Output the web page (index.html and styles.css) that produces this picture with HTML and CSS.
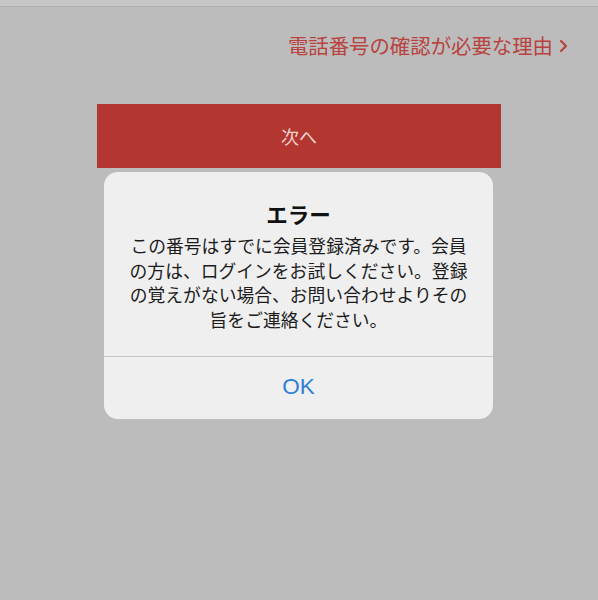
FILE: index.html
```html
<!DOCTYPE html>
<html lang="ja">
<head>
    <meta charset="UTF-8">
    <meta name="viewport" content="width=device-width, initial-scale=1.0">
    <title>電話番号の確認</title>
    <link rel="stylesheet" href="styles.css">
</head>
<body>
    <div class="top-bar"></div>

    <div class="reason-row">
        <a class="reason-link" href="#">電話番号の確認が必要な理由
            <svg class="chevron" width="9" height="14" viewBox="0 0 9 14">
                <path d="M2 2 L7 7 L2 12" fill="none" stroke="#b8433f" stroke-width="2.2" stroke-linecap="round" stroke-linejoin="round"/>
            </svg>
        </a>
    </div>

    <button class="next-btn">次へ</button>

    <!-- Alert -->
    <div class="alert">
        <h3 class="alert-title">エラー</h3>
        <p class="alert-msg">この番号はすでに会員登録済みです。会員<br>の方は、ログインをお試しください。登録<br>の覚えがない場合、お問い合わせよりその<br>旨をご連絡ください。</p>
        <button class="alert-ok">OK</button>
    </div>
</body>
</html>
```

FILE: styles.css
```css
body {
    background: #bcbcbc;
    font-family: "Noto Sans CJK JP", "Noto Sans", sans-serif;
    margin: 0;
    padding: 0;
    height: 600px;
    overflow: hidden;
}
.top-bar {
    height: 6px;
    background: #c6c6c6;
    border-bottom: 1px solid #b0b0b0;
}
.reason-row {
    display: flex;
    justify-content: flex-end;
    padding: 24px 30px 0 0;
}
.reason-link {
    display: flex;
    align-items: center;
    gap: 6px;
    color: #b8433f;
    font-size: 20.4px;
    line-height: 28px;
    text-decoration: none;
}
.chevron {
    margin-top: 1px;
}
.next-btn {
    display: block;
    width: 404px;
    height: 64px;
    margin: 45px 0 0 97px;
    background-color: #b43631;
    color: #ecd3d0;
    font-family: inherit;
    font-size: 18px;
    border: none;
    padding: 0;
}
.alert {
    width: 389px;
    height: 247px;
    margin: 4px 0 0 104px;
    background: #efefef;
    border-radius: 14px;
    text-align: center;
    display: flex;
    flex-direction: column;
    overflow: hidden;
}
.alert-title {
    margin: 0;
    padding-top: 28px;
    font-size: 21.5px;
    line-height: 28px;
    font-weight: bold;
    color: #111;
}
.alert-msg {
    margin: 5px 0 0;
    padding-bottom: 25px;
    font-size: 17.8px;
    line-height: 24.5px;
    color: #1c1c1c;
    border-bottom: 1px solid #c4c4c4;
}
.alert-ok {
    flex: 1;
    background: none;
    border: none;
    color: #2f7fd6;
    font-family: "Liberation Sans", Arial, sans-serif;
    font-size: 22.5px;
    padding: 0 0 2px;
}
```
